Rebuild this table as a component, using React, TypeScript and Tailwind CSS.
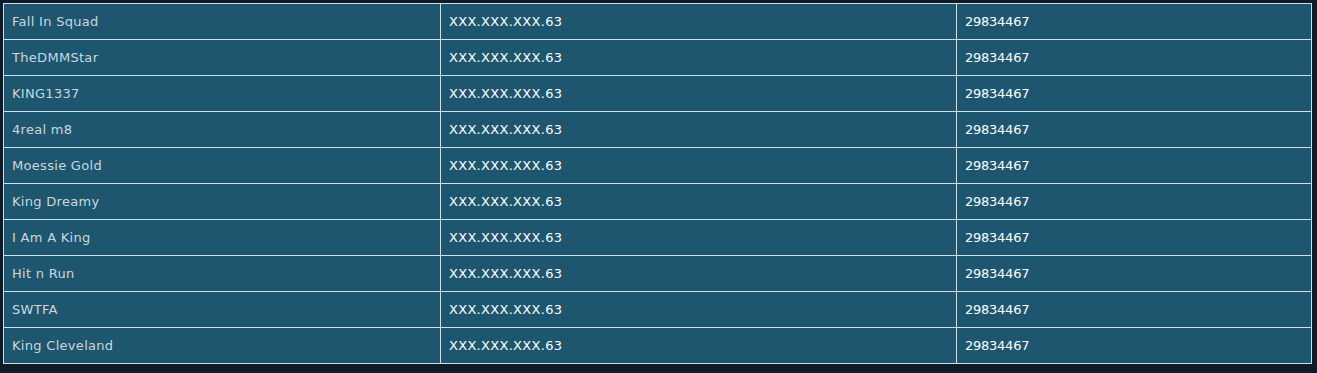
const rows = [
  "Fall In Squad",
  "TheDMMStar",
  "KING1337",
  "4real m8",
  "Moessie Gold",
  "King Dreamy",
  "I Am A King",
  "Hit n Run",
  "SWTFA",
  "King Cleveland",
];

export default function App() {
  return (
    <div className="min-h-[373px] bg-[#0f1b28] pt-[3px] pl-[3px] pr-[5px] pb-[9px]" style={{ fontFamily: '"DejaVu Sans", Verdana, sans-serif' }}>
      <table className="w-[1309px] border-collapse table-fixed text-[13px]">
        <colgroup>
          <col className="w-[437px]" />
          <col className="w-[516px]" />
          <col />
        </colgroup>
        <tbody>
          {rows.map((name) => (
            <tr key={name} className="h-[36px] bg-[#1e566f]">
              <td className="border border-[#cde0e8] px-[8px] pt-[1px] text-[#c8d7df] tracking-[0.3px]">{name}</td>
              <td className="border border-[#cde0e8] px-[8px] pt-[1px] text-white tracking-[0.3px]">XXX.XXX.XXX.63</td>
              <td className="border border-[#cde0e8] px-[8px] pt-[1px] text-white tracking-[-0.25px]">29834467</td>
            </tr>
          ))}
        </tbody>
      </table>
    </div>
  );
}
